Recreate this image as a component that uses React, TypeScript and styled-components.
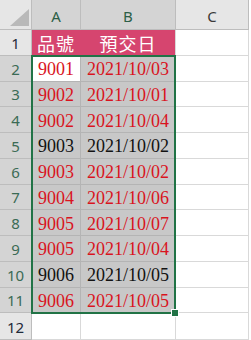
import React from 'react';
import styled, { createGlobalStyle, css } from 'styled-components';

const GlobalStyle = createGlobalStyle`
  html, body {
    margin: 0;
    padding: 0;
    background: #ffffff;
    overflow: hidden;
  }
`;

const GRID_LINE = '#d9d9d9';
const SEL_LINE = '#b4b4b4';
const HEAD_LINE = '#bdbdbd';
const GREEN = '#217346';
const PINK = '#d6456f';

type Row = { no: number; item: string; date: string; black?: boolean };

const rows: Row[] = [
  { no: 2, item: '9001', date: '2021/10/03' },
  { no: 3, item: '9002', date: '2021/10/01' },
  { no: 4, item: '9002', date: '2021/10/04' },
  { no: 5, item: '9003', date: '2021/10/02', black: true },
  { no: 6, item: '9003', date: '2021/10/02' },
  { no: 7, item: '9004', date: '2021/10/06' },
  { no: 8, item: '9005', date: '2021/10/07' },
  { no: 9, item: '9005', date: '2021/10/04' },
  { no: 10, item: '9006', date: '2021/10/05', black: true },
  { no: 11, item: '9006', date: '2021/10/05' },
];

type Pos = { $r: number; $c: number };

// every cell is placed on its own grid line so the selection frame can sit on top
const placed = css<Pos>`
  grid-row: ${(p) => p.$r};
  grid-column: ${(p) => p.$c};
`;

const Sheet = styled.div`
  display: grid;
  grid-template-columns: 32px 49px 95px 73px 1fr;
  grid-template-rows: 30px repeat(11, 25.75px) 1fr;
  width: 251px;
  height: 340px;
  box-sizing: border-box;
`;

const Corner = styled.div<Pos>`
  ${placed};
  box-sizing: border-box;
  background: #e6e6e6;
  border-right: 1px solid ${HEAD_LINE};
  border-bottom: 1px solid ${HEAD_LINE};
  display: flex;
  align-items: flex-end;
  justify-content: flex-end;
  padding: 0 2px 3px 0;
`;

const ColHead = styled.div<Pos & { $selected?: boolean }>`
  ${placed};
  box-sizing: border-box;
  background: ${(p) => (p.$selected ? '#d4d4d4' : '#e6e6e6')};
  color: ${(p) => (p.$selected ? '#2c5f47' : '#3a3a3a')};
  border-right: 1px solid ${HEAD_LINE};
  border-bottom: 1px solid ${HEAD_LINE};
  font-family: 'Noto Sans', 'Liberation Sans', sans-serif;
  font-size: 15px;
  display: flex;
  align-items: center;
  justify-content: center;
  padding-top: 2px;
`;

const RowHead = styled.div<Pos & { $selected?: boolean }>`
  ${placed};
  box-sizing: border-box;
  background: ${(p) => (p.$selected ? '#d4d4d4' : '#e6e6e6')};
  color: ${(p) => (p.$selected ? '#3b6b55' : '#1f2a3a')};
  border-right: 1px solid ${HEAD_LINE};
  border-bottom: 1px solid ${HEAD_LINE};
  font-family: 'Noto Sans', 'Liberation Sans', sans-serif;
  font-size: 15px;
  display: flex;
  align-items: center;
  justify-content: center;
  padding-top: 1px;
`;

const TitleCell = styled.div<Pos & { $last?: boolean }>`
  ${placed};
  box-sizing: border-box;
  background: ${PINK};
  color: #ffffff;
  border-right: 1px solid ${(p) => (p.$last ? GRID_LINE : PINK)};
  border-bottom: 1px solid ${GRID_LINE};
  font-family: 'Noto Sans CJK TC', 'Noto Sans CJK SC', sans-serif;
  font-size: 18px;
  letter-spacing: 1px;
  display: flex;
  align-items: center;
  justify-content: center;
  padding-top: 1px;
`;

const Cell = styled.div<Pos & { $selected?: boolean; $active?: boolean; $black?: boolean }>`
  ${placed};
  box-sizing: border-box;
  background: ${(p) => (p.$active ? '#ffffff' : p.$selected ? '#c8c8c8' : '#ffffff')};
  color: ${(p) => (p.$black ? '#121212' : '#d9141e')};
  border-right: 1px solid ${(p) => (p.$selected ? SEL_LINE : GRID_LINE)};
  border-bottom: 1px solid ${(p) => (p.$selected ? SEL_LINE : GRID_LINE)};
  font-family: 'Liberation Serif', 'Times New Roman', serif;
  font-size: 18px;
  display: flex;
  align-items: center;
  justify-content: center;
  padding-top: 3px;
  white-space: nowrap;
`;

const Selection = styled.div`
  grid-column: 2 / 4;
  grid-row: 3 / 13;
  margin: -1px 0 -1px -1px;
  border: 2px solid ${GREEN};
  position: relative;
  pointer-events: none;
`;

const FillHandle = styled.div`
  position: absolute;
  right: -5px;
  bottom: -5px;
  width: 6px;
  height: 6px;
  background: ${GREEN};
  border: 1px solid #ffffff;
`;

const CornerTriangle = () => (
  <svg width="19" height="17" viewBox="0 0 19 17">
    <polygon points="19,0 19,17 0,17" fill="#b9b9b9" />
  </svg>
);

export default function App() {
  return (
    <>
      <GlobalStyle />
      <Sheet>
        <Corner $r={1} $c={1}>
          <CornerTriangle />
        </Corner>
        <ColHead $r={1} $c={2} $selected>
          A
        </ColHead>
        <ColHead $r={1} $c={3} $selected>
          B
        </ColHead>
        <ColHead $r={1} $c={4}>
          C
        </ColHead>

        <RowHead $r={2} $c={1}>
          1
        </RowHead>
        <TitleCell $r={2} $c={2}>
          品號
        </TitleCell>
        <TitleCell $r={2} $c={3} $last>
          預交日
        </TitleCell>
        <Cell $r={2} $c={4} />

        {rows.map((row, index) => (
          <React.Fragment key={row.no}>
            <RowHead $r={row.no + 1} $c={1} $selected>
              {row.no}
            </RowHead>
            <Cell $r={row.no + 1} $c={2} $selected $active={index === 0} $black={row.black}>
              {row.item}
            </Cell>
            <Cell $r={row.no + 1} $c={3} $selected $black={row.black}>
              {row.date}
            </Cell>
            <Cell $r={row.no + 1} $c={4} />
          </React.Fragment>
        ))}

        <RowHead $r={13} $c={1}>
          12
        </RowHead>
        <Cell $r={13} $c={2} />
        <Cell $r={13} $c={3} />
        <Cell $r={13} $c={4} />

        <Selection>
          <FillHandle />
        </Selection>
      </Sheet>
    </>
  );
}
